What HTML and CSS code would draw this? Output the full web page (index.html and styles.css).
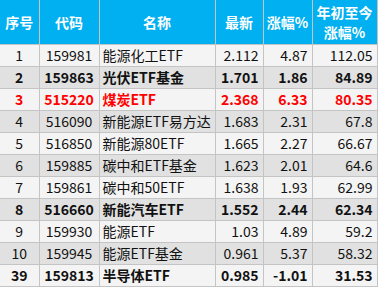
FILE: index.html
```html
<!DOCTYPE html>
<html>
<head>
<meta charset="utf-8">
<link rel="stylesheet" href="styles.css">
</head>
<body>
<table class="tbl">
  <colgroup>
    <col class="c1"><col class="c2"><col class="c3"><col class="c4"><col class="c5"><col class="c6">
  </colgroup>
  <thead>
    <tr>
      <th>序号</th><th>代码</th><th>名称</th><th>最新</th><th>涨幅%</th><th>年初至今<br>涨幅%</th>
    </tr>
  </thead>
  <tbody>
    <tr class="lt"><td class="ctr">1</td><td class="ctr">159981</td><td class="nm">能源化工ETF</td><td class="num">2.112</td><td class="num">4.87</td><td class="num">112.05</td></tr>
    <tr class="dk b"><td class="ctr">2</td><td class="ctr">159863</td><td class="nm">光伏ETF基金</td><td class="num">1.701</td><td class="num">1.86</td><td class="num">84.89</td></tr>
    <tr class="lt b red"><td class="ctr">3</td><td class="ctr">515220</td><td class="nm">煤炭ETF</td><td class="num">2.368</td><td class="num">6.33</td><td class="num">80.35</td></tr>
    <tr class="dk"><td class="ctr">4</td><td class="ctr">516090</td><td class="nm">新能源ETF易方达</td><td class="num">1.683</td><td class="num">2.31</td><td class="num">67.8</td></tr>
    <tr class="lt"><td class="ctr">5</td><td class="ctr">516850</td><td class="nm">新能源80ETF</td><td class="num">1.665</td><td class="num">2.27</td><td class="num">66.67</td></tr>
    <tr class="dk"><td class="ctr">6</td><td class="ctr">159885</td><td class="nm">碳中和ETF基金</td><td class="num">1.623</td><td class="num">2.01</td><td class="num">64.6</td></tr>
    <tr class="lt"><td class="ctr">7</td><td class="ctr">159861</td><td class="nm">碳中和50ETF</td><td class="num">1.638</td><td class="num">1.93</td><td class="num">62.99</td></tr>
    <tr class="dk b"><td class="ctr">8</td><td class="ctr">516660</td><td class="nm">新能汽车ETF</td><td class="num">1.552</td><td class="num">2.44</td><td class="num">62.34</td></tr>
    <tr class="lt"><td class="ctr">9</td><td class="ctr">159930</td><td class="nm">能源ETF</td><td class="num">1.03</td><td class="num">4.89</td><td class="num">59.2</td></tr>
    <tr class="dk"><td class="ctr">10</td><td class="ctr">159945</td><td class="nm">能源ETF基金</td><td class="num">0.961</td><td class="num">5.37</td><td class="num">58.32</td></tr>
    <tr class="lt b"><td class="ctr">39</td><td class="ctr">159813</td><td class="nm">半导体ETF</td><td class="num">0.985</td><td class="num">-1.01</td><td class="num">31.53</td></tr>
  </tbody>
</table>
</body>
</html>
```
FILE: styles.css
```css
html, body {
  margin: 0;
  padding: 0;
  background: #ffffff;
}
.tbl {
  border-collapse: collapse;
  table-layout: fixed;
  width: 377px;
  font-family: "Noto Sans CJK SC", "Noto Sans", sans-serif;
  font-size: 14px;
  color: #111;
}
.c1 { width: 39px; }
.c2 { width: 60px; }
.c3 { width: 116px; }
.c4 { width: 48px; }
.c5 { width: 49px; }
.c6 { width: 65px; }
.tbl th {
  background: #00b0f0;
  color: #fff;
  font-weight: bold;
  font-size: 14px;
  line-height: 20px;
  height: 44px;
  padding: 0;
  text-align: center;
  border-right: 1px solid #c4c4c4;
  border-bottom: 1px solid #c4c4c4;
}
.tbl thead th:first-child { padding: 0; }
.tbl td {
  height: 21px;
  padding: 0;
  line-height: 21px;
  white-space: nowrap;
  overflow: hidden;
  border-right: 1px solid #c4c4c4;
  border-bottom: 1px solid #c4c4c4;
}
.lt td { background: #f4f4f4; }
.dk td { background: #e1e1e1; }
.b td { font-weight: bold; }
.red td { color: #ff0000; }
.ctr { text-align: center; }
.nm { text-align: left; padding-left: 3px !important; }
.num { text-align: right; padding-right: 4px !important; }
```
